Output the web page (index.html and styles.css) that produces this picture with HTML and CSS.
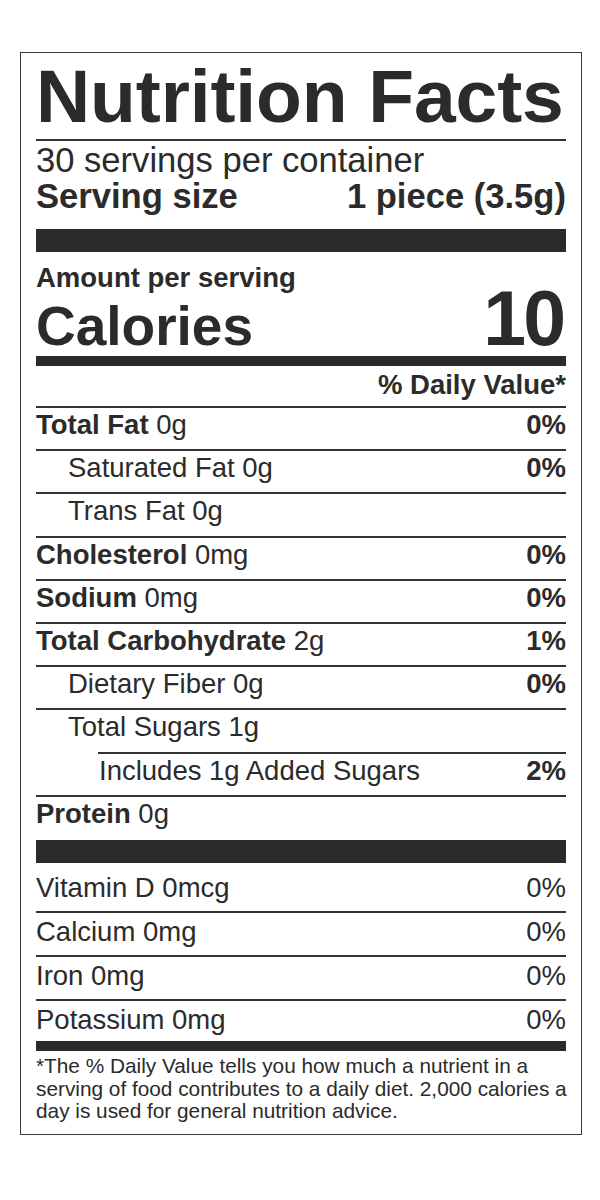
FILE: index.html
```html
<!DOCTYPE html>
<html lang="en">
<head>
<meta charset="utf-8">
<title>Nutrition Facts</title>
<link rel="stylesheet" href="styles.css">
</head>
<body>
<section class="label">
  <h1 class="title">Nutrition Facts</h1>
  <div class="servings">
    <div class="servings-count">30 servings per container</div>
    <div class="serving-size"><span>Serving size</span><span>1 piece (3.5g)</span></div>
  </div>
  <div class="bar bar-thick"></div>
  <div class="amount">Amount per serving</div>
  <div class="calories"><span class="cal-label">Calories</span><span class="cal-value">10</span></div>
  <div class="bar bar-medium"></div>
  <div class="dv-head">% Daily Value*</div>

  <div class="row"><span><b>Total Fat</b> 0g</span><b>0%</b></div>
  <div class="row indent1"><span>Saturated Fat 0g</span><b>0%</b></div>
  <div class="row indent1"><span>Trans Fat 0g</span></div>
  <div class="row"><span><b>Cholesterol</b> 0mg</span><b>0%</b></div>
  <div class="row"><span><b>Sodium</b> 0mg</span><b>0%</b></div>
  <div class="row"><span><b>Total Carbohydrate</b> 2g</span><b>1%</b></div>
  <div class="row indent1"><span>Dietary Fiber 0g</span><b>0%</b></div>
  <div class="row indent1"><span>Total Sugars 1g</span></div>
  <div class="row indent2"><span>Includes 1g Added Sugars</span><b>2%</b></div>
  <div class="row row-protein"><span><b>Protein</b> 0g</span></div>

  <div class="bar bar-thick"></div>

  <div class="vrow vrow-first"><span>Vitamin D 0mcg</span><span>0%</span></div>
  <div class="vrow"><span>Calcium 0mg</span><span>0%</span></div>
  <div class="vrow"><span>Iron 0mg</span><span>0%</span></div>
  <div class="vrow vrow-last"><span>Potassium 0mg</span><span>0%</span></div>

  <div class="bar bar-medium"></div>
  <p class="footnote">*The % Daily Value tells you how much a nutrient in a<br>serving of food contributes to a daily diet. 2,000 calories a<br>day is used for general nutrition advice.</p>
</section>
</body>
</html>
```

FILE: styles.css
```css
html, body {
  margin: 0;
  background: #ffffff;
}

body {
  padding: 52px 0 0 20px;
  font-family: "Liberation Sans", Arial, Helvetica, sans-serif;
  color: #2b2b2b;
}

.label {
  width: 530px;
  padding: 4px 15px 11px 15px;
  border: 1px solid #3a3a3a;
}

.title {
  margin: 0 0 4px 0;
  font-size: 75px;
  line-height: 78px;
  font-weight: 700;
  white-space: nowrap;
  letter-spacing: -0.1px;
}

.servings {
  border-top: 2px solid #333;
  padding-bottom: 16px;
}

.servings-count {
  font-size: 34.6px;
  line-height: 38px;
  white-space: nowrap;
}

.serving-size {
  display: flex;
  justify-content: space-between;
  font-size: 34.6px;
  line-height: 34px;
  font-weight: 700;
  white-space: nowrap;
}

.bar {
  background: #2b2b2b;
}

.bar-thick {
  height: 23px;
}

.bar-medium {
  height: 10px;
}

.amount {
  padding-top: 12px;
  font-size: 27.5px;
  line-height: 27px;
  font-weight: 700;
}

.calories {
  display: flex;
  justify-content: space-between;
  align-items: baseline;
  font-weight: 700;
  margin-bottom: 2px;
}

.cal-label {
  font-size: 55px;
  line-height: 56px;
}

.cal-value {
  font-size: 77px;
  line-height: 54px;
  letter-spacing: -3px;
  margin-right: 3px;
}

.dv-head {
  padding: 4px 0 6px;
  text-align: right;
  font-size: 27.5px;
  line-height: 30px;
  font-weight: 700;
}

.row,
.vrow {
  display: flex;
  justify-content: space-between;
  font-size: 27.5px;
  line-height: 32px;
  white-space: nowrap;
}

.row {
  border-top: 2px solid #333;
  padding: 1px 0 8.2px;
}

.row b {
  font-weight: 700;
}

.indent1 {
  padding-left: 32px;
}

.indent2 {
  margin-left: 62px;
  padding-left: 1px;
}

.row-protein {
  padding-bottom: 10px;
}

.vrow {
  border-top: 2px solid #333;
  padding: 3px 0 7px;
}

.vrow-first {
  border-top: 0;
  padding: 9px 0 7px;
}

.vrow-last {
  padding-bottom: 5px;
}

.footnote {
  margin: 0;
  padding-top: 4.5px;
  font-size: 20.8px;
  line-height: 22.6px;
  white-space: nowrap;
}
```
